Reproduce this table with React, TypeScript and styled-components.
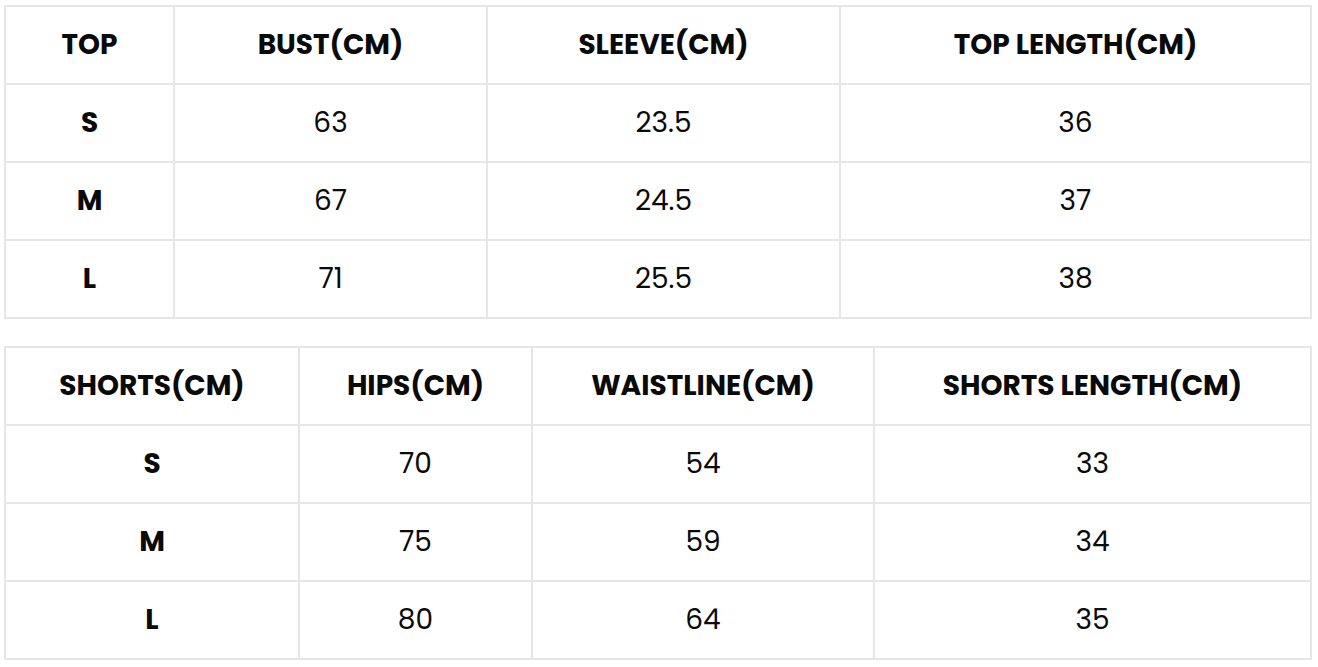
import styled, { createGlobalStyle } from "styled-components";

const GlobalStyle = createGlobalStyle`
  body {
    margin: 0;
    background: #ffffff;
    font-family: "Poppins", "Inter", "Noto Sans", sans-serif;
    color: #000000;
  }
`;

const Page = styled.div`
  display: flex;
  flex-direction: column;
  gap: 27px;
  padding: 5px 0 0 4px;
`;

const Table = styled.div<{ $cols: string }>`
  display: grid;
  grid-template-columns: ${(p) => p.$cols};
  width: 1308px;
  box-sizing: border-box;
  border-top: 2px solid #e6e6e6;
  border-left: 2px solid #e6e6e6;
`;

const Cell = styled.div<{ $bold?: boolean }>`
  display: flex;
  align-items: center;
  justify-content: center;
  height: 78px;
  box-sizing: border-box;
  border-right: 2px solid #e6e6e6;
  border-bottom: 2px solid #e6e6e6;
  font-size: 28px;
  line-height: 1;
  font-weight: ${(p) => (p.$bold ? 700 : 400)};
  text-transform: uppercase;
  color: #0a0a0a;
`;

type Chart = {
  cols: string;
  head: string[];
  rows: string[][];
};

const charts: Chart[] = [
  {
    cols: "169px 313px 353px 1fr",
    head: ["TOP", "BUST(CM)", "SLEEVE(CM)", "TOP LENGTH(CM)"],
    rows: [
      ["S", "63", "23.5", "36"],
      ["M", "67", "24.5", "37"],
      ["L", "71", "25.5", "38"],
    ],
  },
  {
    cols: "294px 233px 342px 1fr",
    head: ["SHORTS(CM)", "HIPS(CM)", "WAISTLINE(CM)", "SHORTS LENGTH(CM)"],
    rows: [
      ["S", "70", "54", "33"],
      ["M", "75", "59", "34"],
      ["L", "80", "64", "35"],
    ],
  },
];

export default function App() {
  return (
    <>
      <GlobalStyle />
      <Page>
        {charts.map((chart) => (
          <Table key={chart.head[0]} $cols={chart.cols}>
            {chart.head.map((h) => (
              <Cell key={h} $bold>
                {h}
              </Cell>
            ))}
            {chart.rows.map((row) =>
              row.map((v, i) => (
                <Cell key={row[0] + i} $bold={i === 0}>
                  {v}
                </Cell>
              ))
            )}
          </Table>
        ))}
      </Page>
    </>
  );
}
